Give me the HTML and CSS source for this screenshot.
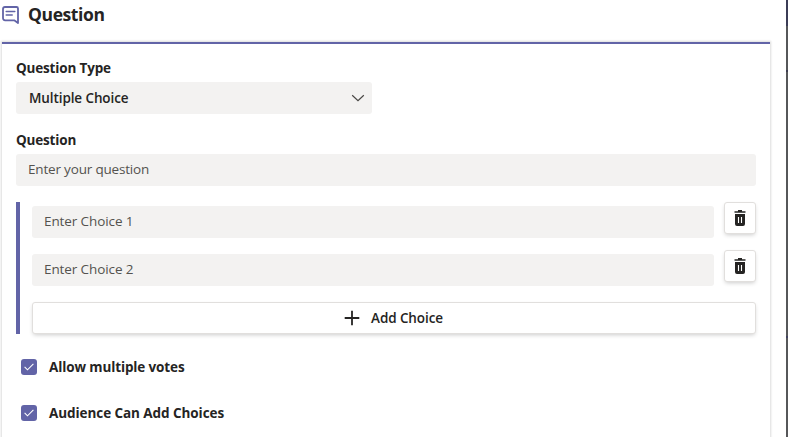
FILE: index.html
```html
<!DOCTYPE html>
<html lang="en">
<head>
<meta charset="utf-8">
<title>Question</title>
<link rel="stylesheet" href="styles.css">
</head>
<body>
<div class="shell">
  <main class="panel">
    <header class="header">
      <svg class="header-icon" width="17" height="18" viewBox="0 0 17 18" fill="none" stroke="#6264a7" stroke-width="1.8" stroke-linejoin="round" stroke-linecap="round"><path d="M3 1h11.500q1.500 0 1.500 1.500V17l-3.800-2.700H3.200Q1 14.300 1 12.100V3q0-2 2-2z"/><path stroke-width="1.500" d="M4.200 5.500h8.600M4.200 9h6"/></svg>
      <h1 class="title">Question</h1>
    </header>
    <section class="card">
      <label class="label type-label">Question Type</label>
      <div class="select"><span class="select-text">Multiple Choice</span>
        <svg width="14" height="8" viewBox="0 0 14 8" fill="none" stroke="#484644" stroke-width="1.2"><path d="M1.200 1.200l5.800 5.400 5.800-5.400"/></svg>
      </div>
      <label class="label question-label">Question</label>
      <div class="field"><span class="ph-question">Enter your question</span></div>
      <div class="choices">
        <div class="choice">
          <div class="field"><span class="ph-choice">Enter Choice 1</span></div>
          <button class="button delete" aria-label="Delete choice 1"><svg width="12" height="16" viewBox="0 0 12 16"><path fill="#252423" d="M4 0h4v1.300h3.500v1.400H.5V1.300H4zM1 4h10v10q0 2-2 2H3q-2 0-2-2z"/><path stroke="#fff" stroke-width="1.100" d="M4.500 7v6M7.500 7v6"/></svg></button>
        </div>
        <div class="choice">
          <div class="field"><span class="ph-choice">Enter Choice 2</span></div>
          <button class="button delete" aria-label="Delete choice 2"><svg width="12" height="16" viewBox="0 0 12 16"><path fill="#252423" d="M4 0h4v1.300h3.500v1.400H.5V1.300H4zM1 4h10v10q0 2-2 2H3q-2 0-2-2z"/><path stroke="#fff" stroke-width="1.100" d="M4.500 7v6M7.500 7v6"/></svg></button>
        </div>
        <button class="button add"><svg width="16" height="16" viewBox="0 0 16 16" stroke="#252423" stroke-width="1.800"><path d="M8 .7v14.600M.7 8h14.600"/></svg><span class="add-text">Add Choice</span></button>
      </div>
      <div class="check-row"><span class="checkbox"><svg width="10" height="8" viewBox="0 0 10 8" fill="none" stroke="#fff" stroke-width="1.100"><path d="M.6 3.900l2.900 2.900L9.400.9"/></svg></span><span class="label allow">Allow multiple votes</span></div>
      <div class="check-row"><span class="checkbox"><svg width="10" height="8" viewBox="0 0 10 8" fill="none" stroke="#fff" stroke-width="1.100"><path d="M.6 3.900l2.900 2.900L9.400.9"/></svg></span><span class="label audience">Audience Can Add Choices</span></div>
    </section>
  </main>
  <aside class="backdrop"></aside>
</div>
</body>
</html>
```
FILE: styles.css
```css
* { box-sizing: border-box; }
body { margin: 0; background: #fff; color: #252423; font: 13.5px/20px "Segoe UI", "Open Sans", "Noto Sans", sans-serif; }
.shell { display: flex; height: 437px; overflow: hidden; }
.panel { flex: 1; padding: 0 16px 0 2px; }
.backdrop { width: 2px; background: linear-gradient(#3b3c56 0 26px, #565759 26px 70px, #3c3c50 70px 72px, #565759 72px 336px, #414160 336px 338px, #565759 338px); }
.header { display: flex; align-items: center; height: 42px; padding-bottom: 12px; }
.header-icon { flex: none; }
.title { margin: 0 0 2px 9px; font-size: 17.5px; line-height: 24px; font-weight: 700; letter-spacing: -.4px; white-space: nowrap; }
.card { height: 410px; padding: 14px 14px 0; border-top: 2px solid #6264a7; box-shadow: 0 0 2px 1px rgba(0, 0, 0, .14); }
.label { display: block; font-weight: 700; letter-spacing: -.17px; white-space: nowrap; }
.label.allow { letter-spacing: -.12px; }
.label.audience { letter-spacing: -.07px; }
.select { display: flex; align-items: center; justify-content: space-between; width: 356px; height: 32px; margin: 4px 0 16px; padding: 0 7px 0 13px; border-radius: 3px; background: #f3f2f1; }
.select-text, .add-text { font-weight: 600; letter-spacing: -.1px; }
.field { display: flex; align-items: center; height: 32px; padding: 0 12px 2px; border-radius: 3px; background: #f3f2f1; color: #54524f; letter-spacing: -.18px; }
.question-label + .field { margin-top: 4px; }
.choices { margin: 16px 0 22px; height: 132px; padding-left: 12px; border-left: 4px solid #6264a7; }
.choice { display: flex; align-items: flex-start; height: 48px; gap: 10px; }
.choice .field { flex: 1; margin-top: 4px; letter-spacing: -.1px; }
.button { display: flex; align-items: center; justify-content: center; padding: 0; border: 1px solid #e1dfdd; border-radius: 3px; background: #fff; color: #252423; font: inherit; box-shadow: 0 2px 4px -1px rgba(0, 0, 0, .2); }
.delete { width: 32px; height: 32px; }
.add { width: 100%; height: 32px; margin-top: 4px; padding-right: 1px; gap: 11px; }
.check-row { display: flex; align-items: center; height: 22px; margin-bottom: 24px; padding-left: 5px; gap: 12px; }
.checkbox { display: flex; align-items: center; justify-content: center; width: 16px; height: 16px; border-radius: 3px; background: #6264a7; }
```
